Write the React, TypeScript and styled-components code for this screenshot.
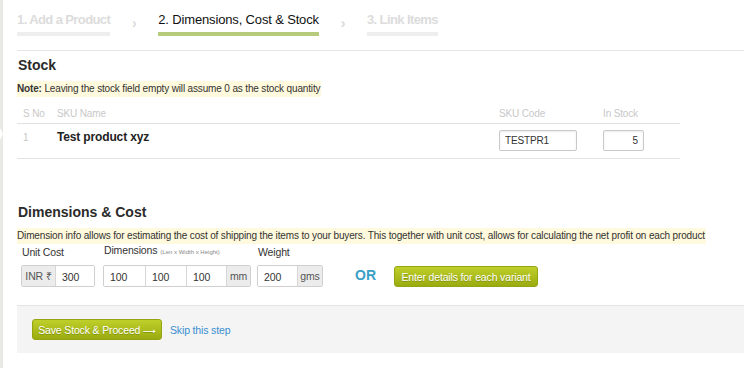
import styled, { createGlobalStyle } from "styled-components";

const GlobalStyle = createGlobalStyle`
  html, body { margin: 0; padding: 0; background: #fff; }
  body {
    font-family: "Liberation Sans", Arial, sans-serif;
    font-size: 10px;
    letter-spacing: -0.15px;
    color: #333;
  }
  * { box-sizing: border-box; }
`;

const Page = styled.div`
  display: flex;
  width: 744px;
  min-height: 368px;
`;

const Rail = styled.div`
  position: relative;
  width: 3px;
  flex: none;
  background: #e8e8e4;

  &::after {
    content: "";
    position: absolute;
    left: 0;
    top: 128px;
    border-top: 6px solid transparent;
    border-bottom: 6px solid transparent;
    border-left: 3px solid #fff;
  }
`;

const Main = styled.div`
  flex: 1;
  padding-left: 14px;
`;

const Steps = styled.div`
  display: flex;
  align-items: flex-start;
  height: 51px;
  border-bottom: 1px solid #e6e6e6;
`;

const Step = styled.div<{ active?: boolean }>`
  padding-top: 12px;
  font-size: 13px;
  font-weight: ${(p) => (p.active ? "normal" : "bold")};
  color: ${(p) => (p.active ? "#111" : "#dcdcdc")};
  letter-spacing: ${(p) => (p.active ? "-0.15px" : "-0.6px")};

  span {
    display: block;
    line-height: 16px;
    padding-bottom: 4px;
  }

  &::after {
    content: "";
    display: block;
    height: 4px;
    background: ${(p) => (p.active ? "#b6cc7c" : "#eeeeee")};
  }
`;

const StepArrow = styled.div`
  width: 48px;
  text-align: center;
  padding-top: 15px;
  font-size: 14px;
  font-weight: bold;
  color: #dadada;
`;

const Section = styled.section<{ top: number }>`
  padding-top: ${(p) => p.top}px;
`;

const Heading = styled.h2`
  margin: 0 0 0 1px;
  font-size: 14px;
  line-height: 17px;
  font-weight: bold;
  letter-spacing: 0;
  color: #2b2b2b;
`;

const Note = styled.div`
  display: inline-block;
  margin-top: 7px;
  padding: 0 1px 0 0;
  line-height: 16px;
  background: #fff9dd;
  color: #333;
  white-space: nowrap;

  b { font-weight: bold; }
`;

const Table = styled.div`
  width: 663px;
  margin-top: 6px;
`;

const Row = styled.div<{ head?: boolean }>`
  display: grid;
  grid-template-columns: 40px 442px 104px 77px;
  align-items: start;
  height: ${(p) => (p.head ? 21 : 35)}px;
  padding-top: ${(p) => (p.head ? 5 : 6)}px;
  border-bottom: 1px solid #e2e2e2;
  color: ${(p) => (p.head ? "#c8c8c8" : "#333")};
`;

const Cell = styled.div<{ pad?: number; top?: number }>`
  padding-left: ${(p) => p.pad ?? 0}px;
  padding-top: ${(p) => p.top ?? 0}px;
`;

const SerialCell = styled(Cell)`
  color: #c8c8c8;
`;

const NameCell = styled.div`
  font-size: 12px;
  font-weight: bold;
  letter-spacing: -0.15px;
  color: #222;
`;

const TextInput = styled.input<{ w: number; right?: boolean }>`
  width: ${(p) => p.w}px;
  height: 21px;
  padding: 0 5px;
  border: 1px solid #c9c9c9;
  border-radius: 2px;
  box-shadow: inset 0 1px 2px rgba(0, 0, 0, 0.08);
  font-family: inherit;
  font-size: 10px;
  letter-spacing: -0.15px;
  color: #333;
  text-align: ${(p) => (p.right ? "right" : "left")};
  outline: none;
`;

const FieldsRow = styled.div`
  display: flex;
  align-items: flex-end;
  margin-top: -1px;
  padding-left: 4px;
`;

const Field = styled.div<{ gap: number }>`
  margin-right: ${(p) => p.gap}px;
`;

const Label = styled.div`
  padding-left: 1px;
  font-size: 10.5px;
  line-height: 14px;
  color: #333;
  margin-bottom: 6px;

  small {
    font-size: 6px;
    letter-spacing: 0;
    color: #888;
    margin-left: 3px;
  }
`;

const Group = styled.div`
  display: flex;
  height: 22px;
  border: 1px solid #cfcfcf;
  border-radius: 2px;
  overflow: hidden;
`;

const GroupInput = styled.input<{ w: number }>`
  width: ${(p) => p.w}px;
  height: 100%;
  border: none;
  border-left: 1px solid #d6d6d6;
  padding: 1px 6px 0;
  font-family: inherit;
  font-size: 10.5px;
  letter-spacing: -0.15px;
  color: #333;
  background: #fff;
  outline: none;

  &:first-child { border-left: none; }
`;

const Addon = styled.span<{ w: number }>`
  display: flex;
  align-items: center;
  justify-content: center;
  width: ${(p) => p.w}px;
  background: #ececec;
  border-left: 1px solid #d6d6d6;
  color: #555;
  font-size: 10.5px;

  &:first-child { border-left: none; }
`;

const Or = styled.div`
  align-self: flex-end;
  width: 39px;
  margin: 0 0 4px 32px;
  font-size: 14px;
  font-weight: bold;
  letter-spacing: 0;
  color: #3aa0c8;
`;

const GreenButton = styled.button<{ w: number }>`
  width: ${(p) => p.w}px;
  height: 21px;
  padding: 0;
  border: 1px solid #95a512;
  border-radius: 3px;
  background: linear-gradient(#bfcf2a, #9aab10);
  color: #fff;
  font-family: inherit;
  font-size: 10.5px;
  letter-spacing: -0.15px;
  white-space: nowrap;
  text-shadow: 0 1px 0 rgba(80, 90, 0, 0.4);
  cursor: pointer;
`;

const ArrowGlyph = styled.span`
  font-family: "DejaVu Sans", sans-serif;
  font-size: 9px;
`;

const Footer = styled.div`
  display: flex;
  align-items: center;
  gap: 8px;
  height: 48px;
  margin-top: 18px;
  padding-left: 15px;
  background: #f4f4f4;
  border-top: 1px solid #e4e4e4;
`;

const Skip = styled.a`
  color: #3a8ed0;
  font-size: 10.5px;
  text-decoration: none;
  cursor: pointer;
`;

export default function App() {
  return (
    <>
      <GlobalStyle />
      <Page>
        <Rail />
        <Main>
          <Steps>
            <Step><span>1. Add a Product</span></Step>
            <StepArrow>›</StepArrow>
            <Step active><span>2. Dimensions, Cost &amp; Stock</span></Step>
            <StepArrow>›</StepArrow>
            <Step><span>3. Link Items</span></Step>
          </Steps>

          <Section top={6}>
            <Heading>Stock</Heading>
            <Note>
              <b>Note:</b> Leaving the stock field empty will assume 0 as the stock quantity
            </Note>
            <Table>
              <Row head>
                <Cell pad={6}>S No</Cell>
                <Cell>SKU Name</Cell>
                <Cell>SKU Code</Cell>
                <Cell>In Stock</Cell>
              </Row>
              <Row>
                <SerialCell pad={6} top={2}>1</SerialCell>
                <NameCell>Test product xyz</NameCell>
                <Cell>
                  <TextInput w={78} defaultValue="TESTPR1" />
                </Cell>
                <Cell>
                  <TextInput w={41} right defaultValue="5" />
                </Cell>
              </Row>
            </Table>
          </Section>

          <Section top={45}>
            <Heading>Dimensions &amp; Cost</Heading>
            <Note>
              Dimension info allows for estimating the cost of shipping the items to your buyers. This together with unit cost, allows for calculating the net profit on each product
            </Note>
            <FieldsRow>
              <Field gap={8}>
                <Label>Unit Cost</Label>
                <Group>
                  <Addon w={33}>INR ₹</Addon>
                  <GroupInput w={39} defaultValue="300" />
                </Group>
              </Field>
              <Field gap={6}>
                <Label>
                  Dimensions<small>(Len x Width x Height)</small>
                </Label>
                <Group>
                  <GroupInput w={41} defaultValue="100" />
                  <GroupInput w={41} defaultValue="100" />
                  <GroupInput w={40} defaultValue="100" />
                  <Addon w={24}>mm</Addon>
                </Group>
              </Field>
              <Field gap={0}>
                <Label>Weight</Label>
                <Group>
                  <GroupInput w={39} defaultValue="200" />
                  <Addon w={25}>gms</Addon>
                </Group>
              </Field>
              <Or>OR</Or>
              <GreenButton w={144}>Enter details for each variant</GreenButton>
            </FieldsRow>
          </Section>

          <Footer>
            <GreenButton w={130}>
              Save Stock &amp; Proceed <ArrowGlyph>⟶</ArrowGlyph>
            </GreenButton>
            <Skip>Skip this step</Skip>
          </Footer>
        </Main>
      </Page>
    </>
  );
}
